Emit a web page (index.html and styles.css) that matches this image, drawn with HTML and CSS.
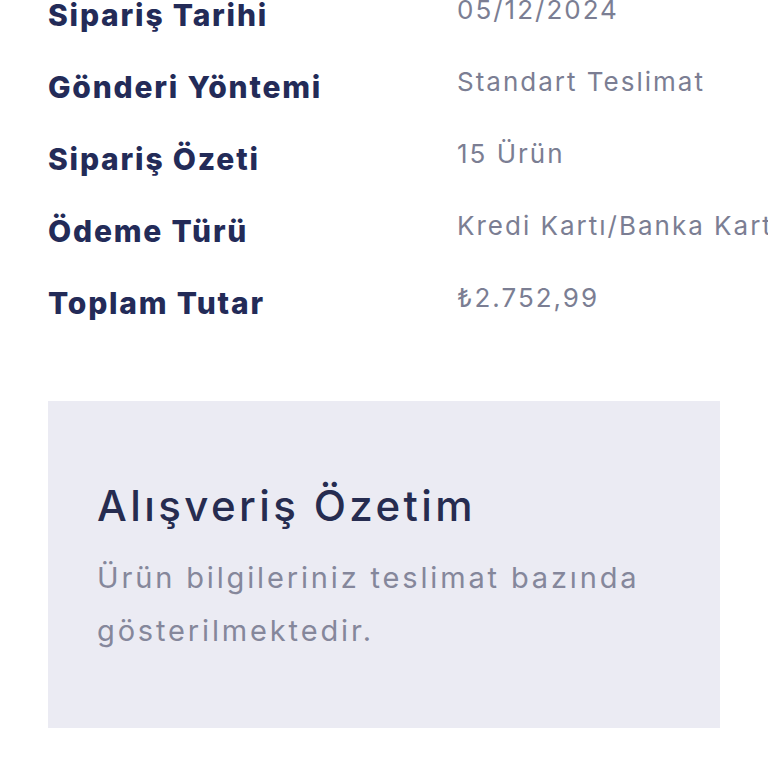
FILE: index.html
```html
<!DOCTYPE html>
<html lang="tr">
<head>
<meta charset="utf-8">
<link rel="stylesheet" href="styles.css">
</head>
<body>
<div class="details">
  <div class="row"><div class="label">Sipariş Tarihi</div><div class="value">05/12/2024</div></div>
  <div class="row"><div class="label">Gönderi Yöntemi</div><div class="value">Standart Teslimat</div></div>
  <div class="row"><div class="label">Sipariş Özeti</div><div class="value">15 Ürün</div></div>
  <div class="row"><div class="label">Ödeme Türü</div><div class="value">Kredi Kartı/Banka Kartı</div></div>
  <div class="row"><div class="label">Toplam Tutar</div><div class="value">₺2.752,99</div></div>
</div>
<section class="summary">
  <h2 class="summary-title">Alışveriş Özetim</h2>
  <p class="summary-text">Ürün bilgileriniz teslimat bazında gösterilmektedir.</p>
</section>
</body>
</html>
```
FILE: styles.css
```css
html, body {
  margin: 0;
  padding: 0;
  overflow: hidden;
  background: #ffffff;
  font-family: Inter, "Noto Sans", sans-serif;
}
body {
  width: 768px;
  height: 768px;
}
.details {
  margin-top: -5px;
  padding-left: 48px;
  display: flex;
  flex-direction: column;
  gap: 32px;
}
.row {
  display: grid;
  grid-template-columns: 409px max-content;
  align-items: start;
  height: 40px;
  white-space: nowrap;
}
.label {
  font-size: 30px;
  line-height: 40px;
  font-weight: 800;
  letter-spacing: 1.8px;
  color: #232b58;
}
.value {
  font-size: 26px;
  line-height: 30px;
  font-weight: 400;
  letter-spacing: 2px;
  color: #7b7e93;
}
.summary {
  margin: 78px 48px 0;
  background: #ebebf3;
  padding: 80px 49px 71px;
}
.summary-title {
  margin: 0;
  font-size: 42px;
  line-height: 49px;
  font-weight: 500;
  letter-spacing: 3.4px;
  color: #262c50;
}
.summary-text {
  margin: 21px 0 0;
  font-size: 29px;
  line-height: 53px;
  letter-spacing: 2.85px;
  color: #85879b;
}
```
